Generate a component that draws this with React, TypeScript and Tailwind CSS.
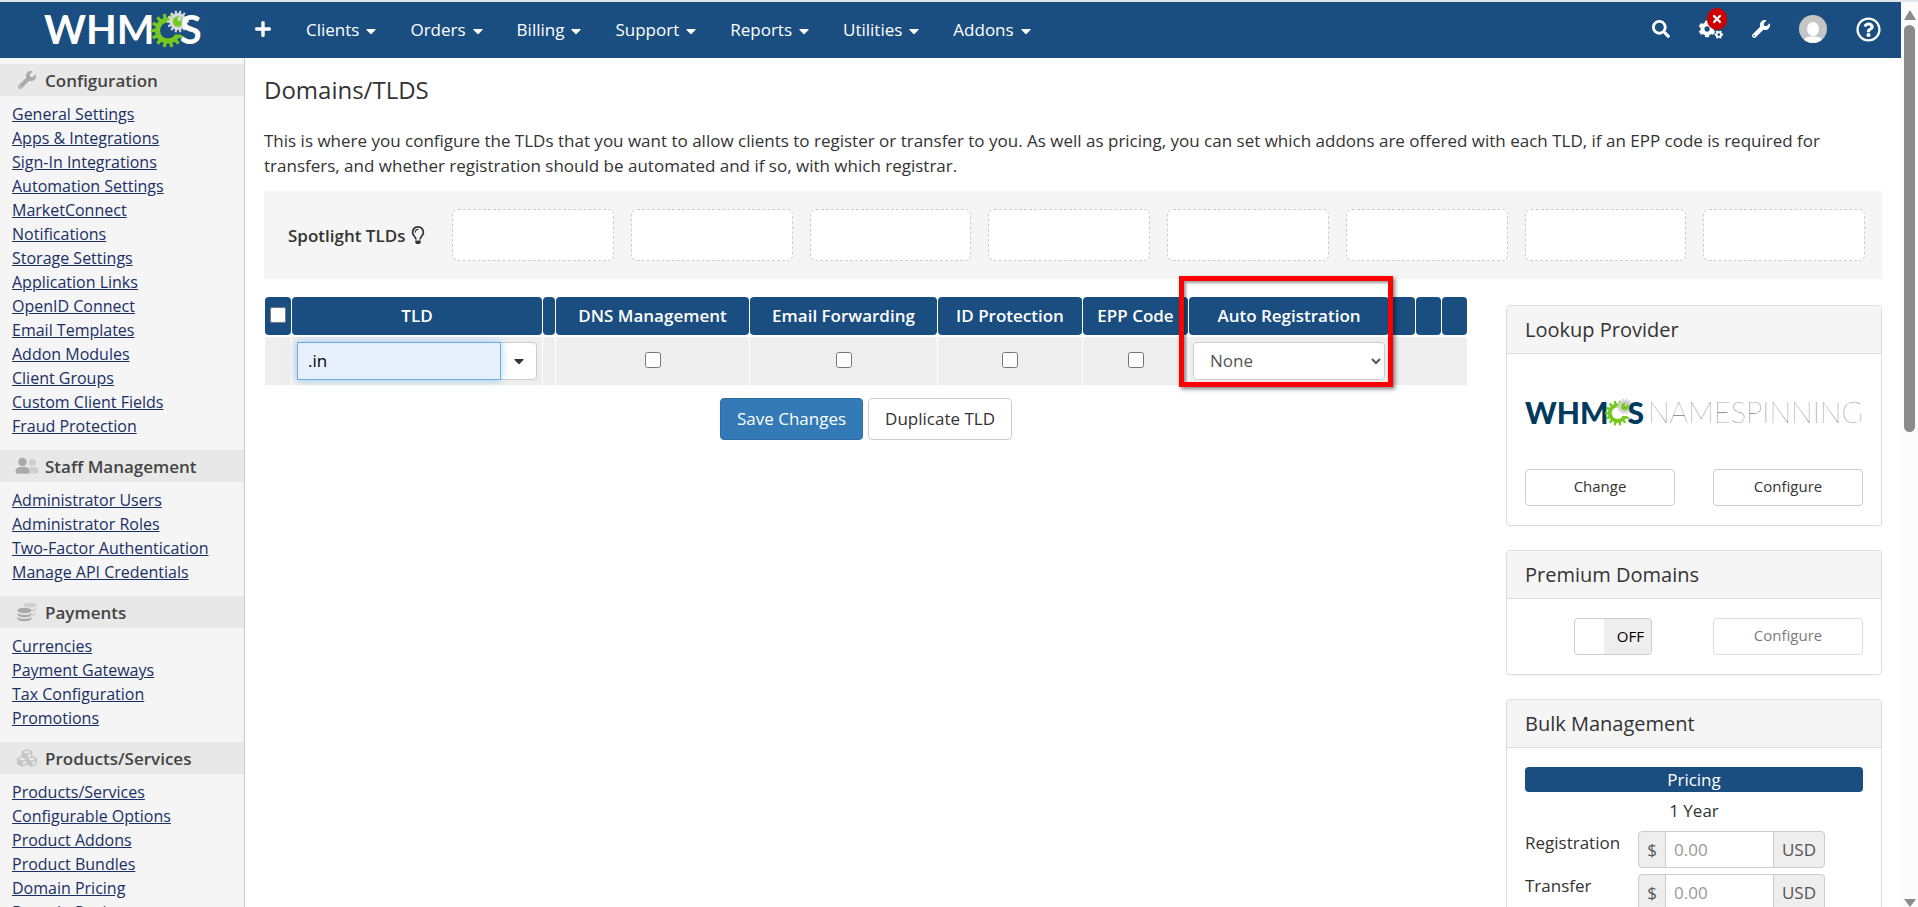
import React, { useState } from 'react';
import {
    FaCaretDown,
    FaCogs,
    FaCubes,
    FaPlus,
    FaRegLightbulb,
    FaRegQuestionCircle,
    FaSearch,
    FaTimes,
    FaWrench,
} from 'react-icons/fa';

const menus = [
    'Clients',
    'Orders',
    'Billing',
    'Support',
    'Reports',
    'Utilities',
    'Addons',
];

const UsersIcon = () => (
    <svg viewBox="0 0 24 18" className="w-6 h-[18px]">
        <g fill="#cfcfcf">
            <circle cx="17.5" cy="5.5" r="3.6" />
            <path d="M12 16.5v-2.5a4 4 0 0 1 4-4h3.5a4 4 0 0 1 4 4v2.5z" />
        </g>
        <g fill="#aaa">
            <circle cx="7.5" cy="5" r="4.2" />
            <path d="M0.5 14.5a4.5 4.5 0 0 1 4.5-4.5h5a4.5 4.5 0 0 1 4.5 4.5c0 1.5-1 2.2-2.3 2.2H2.8C1.5 16.7.5 16 .5 14.5z" />
        </g>
    </svg>
);

const CoinsIcon = () => (
    <svg viewBox="0 0 20 20" className="w-5 h-5">
        <g fill="#cfcfcf">
            <ellipse cx="13" cy="3" rx="6.5" ry="2.3" />
            <path d="M14.5 7.5c2.5 0 4.5-.8 5-2v1.5c0 1.4-2 2.5-5 2.800zM15 12c2.3-.2 4-1 4.3-2v1.5c-.2 1.3-2 2.3-4.3 2.500z" />
        </g>
        <g fill="#a9a9a9">
            <ellipse cx="7.5" cy="8.5" rx="7" ry="2.7" />
            <path d="M.5 11c1 1.3 3.500 2 7 2s6-.7 7-2v1.5c0 1.5-3 2.7-7 2.7s-7-1.2-7-2.7zM.5 15c1 1.3 3.500 2 7 2s6-.7 7-2v1.5c0 1.5-3 2.7-7 2.7s-7-1.2-7-2.7z" />
        </g>
    </svg>
);

const sections = [
    {
        title: 'Configuration',
        icon: <FaWrench className="h-[18px] w-[18px] text-[#aaa]" />,
        links: [
            'General Settings',
            'Apps & Integrations',
            'Sign-In Integrations',
            'Automation Settings',
            'MarketConnect',
            'Notifications',
            'Storage Settings',
            'Application Links',
            'OpenID Connect',
            'Email Templates',
            'Addon Modules',
            'Client Groups',
            'Custom Client Fields',
            'Fraud Protection',
        ],
    },
    {
        title: 'Staff Management',
        icon: <UsersIcon />,
        links: [
            'Administrator Users',
            'Administrator Roles',
            'Two-Factor Authentication',
            'Manage API Credentials',
        ],
    },
    {
        title: 'Payments',
        icon: <CoinsIcon />,
        links: [
            'Currencies',
            'Payment Gateways',
            'Tax Configuration',
            'Promotions',
        ],
    },
    {
        title: 'Products/Services',
        icon: <FaCubes className="h-5 w-5 text-[#c4c4c4]" />,
        links: [
            'Products/Services',
            'Configurable Options',
            'Product Addons',
            'Product Bundles',
            'Domain Pricing',
            'Domain Registrars',
        ],
    },
];

// one cog wheel centred on 0,0
const toothed = (teeth: number, outer: number, inner: number) => {
    const points: string[] = [];
    const step = (Math.PI * 2) / teeth;
    for (let i = 0; i < teeth; i++) {
        const a = i * step;
        [
            [a - step * 0.3, inner],
            [a - step * 0.2, outer],
            [a + step * 0.2, outer],
            [a + step * 0.3, inner],
        ].forEach(([angle, r]) => {
            points.push(
                `${(Math.cos(angle) * r).toFixed(2)},${(Math.sin(angle) * r).toFixed(2)}`
            );
        });
    }
    return points.join(' ');
};

const GearMark = ({
    className,
    ground,
    small,
}: {
    className: string;
    ground: string;
    small: string;
}) => (
    <svg viewBox="0 0 38 38" className={className}>
        <g transform="translate(17 20.5)">
            <polygon points={toothed(14, 17, 13)} fill="#77c81e" />
            <circle r="8" fill={ground} />
            <path d="M2 -8L18 -12V4H2z" fill={ground} />
        </g>
        <g transform="translate(27 11.5)">
            <polygon points={toothed(14, 11, 8.5)} fill={small} />
            <circle r="5.2" fill="#77c81e" />
            <circle cx="1.5" cy="-2.5" r="2" fill={small} />
        </g>
    </svg>
);

const Header = () => (
    <header className="flex h-14 items-center bg-[#1a4d80] pb-0.5 text-white">
        <a
            href="#"
            aria-label="WHMCS"
            className="mr-[53px] ml-11 flex w-[157px] items-center font-[Lato,sans-serif] text-[40px] leading-[50px] font-bold"
        >
            WHM
            <GearMark
                className="-mr-[9px] -ml-1 h-[38px] w-[38px] shrink-0"
                ground="#1a4d80"
                small="#d5d8dc"
            />
            S
        </a>
        <nav className="flex items-center gap-[34px]">
            <button aria-label="Add">
                <FaPlus className="h-[18px] w-[18px]" />
            </button>
            {menus.map((menu) => (
                <button key={menu} className="flex items-center gap-[7px]">
                    {menu}
                    <FaCaretDown className="mt-1 h-4 w-[10px]" />
                </button>
            ))}
        </nav>
        <div className="mr-5 ml-auto flex items-center gap-[29px]">
            <button aria-label="Search">
                <FaSearch className="h-[18px] w-[18px]" />
            </button>
            <button aria-label="System health" className="relative">
                <FaCogs className="h-6 w-6" />
                <span className="absolute -top-[9px] left-2 flex h-[22px] w-5 items-center justify-center rounded-full bg-[#c00]">
                    <FaTimes className="h-3 w-3" />
                </span>
            </button>
            <button aria-label="Setup">
                <FaWrench className="h-[18px] w-[18px]" />
            </button>
            <button
                aria-label="Account"
                className="h-7 w-7 overflow-hidden rounded-full"
            >
                <svg viewBox="0 0 28 28">
                    <rect width="28" height="28" fill="#c5c5c5" />
                    <ellipse cx="14" cy="14" rx="6" ry="7" fill="#fff" />
                    <path d="M4 28c1-6 5-6.500 10-6.500S23 22 24 28z" fill="#fff" />
                </svg>
            </button>
            <button aria-label="Help">
                <FaRegQuestionCircle className="h-[25px] w-[25px]" />
            </button>
        </div>
    </header>
);

const Sidebar = () => (
    <aside className="w-[245px] shrink-0 overflow-hidden border-r border-[#ccc] bg-[#f5f5f5] pt-[6px]">
        {sections.map((section) => (
            <section key={section.title}>
                <h2 className="flex h-8 items-center bg-[#e8e8e8] pl-[15px] font-semibold text-[#444]">
                    <span className="mr-[6px] flex w-6 justify-center">
                        {section.icon}
                    </span>
                    {section.title}
                </h2>
                <ul className="pt-[6px] pb-3 pl-3 text-base leading-6 whitespace-nowrap">
                    {section.links.map((link) => (
                        <li key={link}>
                            <a href="#" className="text-[#1a2f66] underline">
                                {link}
                            </a>
                        </li>
                    ))}
                </ul>
            </section>
        ))}
    </aside>
);

const Panel = ({
    title,
    children,
}: {
    title: string;
    children: React.ReactNode;
}) => (
    <section className="mb-6 rounded border border-[#ddd] shadow-xs">
        <h3 className="rounded-t border-b border-[#ddd] bg-[#f5f5f5] px-[18px] text-xl leading-[47px]">
            {title}
        </h3>
        <div className="px-[18px] py-[19px]">{children}</div>
    </section>
);

const SmallButton = ({
    disabled,
    children,
}: {
    disabled?: boolean;
    children: React.ReactNode;
}) => (
    <button
        disabled={disabled}
        className="h-[37px] w-[150px] rounded border border-[#ccc] bg-white pb-0.5 text-[15px] disabled:opacity-65"
    >
        {children}
    </button>
);

const PriceRow = ({ label }: { label: string }) => (
    <div className="mb-[6px] flex h-[37px]">
        <label htmlFor={label} className="w-[113px] leading-6">
            {label}
        </label>
        <div className="flex w-[187px] rounded border border-[#ccc] bg-[#eee] leading-[35px] text-[#555]">
            <span className="w-[26px] text-center">$</span>
            <input
                id={label}
                placeholder="0.00"
                className="w-[109px] border-x border-[#ccc] bg-white px-2 placeholder:text-[#999] outline-none"
            />
            <span className="flex-1 text-center">USD</span>
        </div>
    </div>
);

const head =
    'h-[38px] rounded bg-[#1a4d80] p-0 pb-0.5 text-center font-semibold text-white';
const cell = 'h-[48px] bg-[#eee] p-0 text-center';
const tick = 'block mx-auto mb-0.5 h-4 w-4';

const TldTable = () => {
    const [tld, setTld] = useState('.in');

    return (
        <table className="w-full table-fixed border-separate border-spacing-x-px border-spacing-y-[2px]">
            <colgroup>
                <col className="w-[26px]" />
                <col className="w-[250px]" />
                <col className="w-3" />
                <col />
                <col className="w-[187px]" />
                <col className="w-36" />
                <col className="w-[105px]" />
                <col className="w-[200px]" />
                <col className="w-[25px]" />
                <col className="w-[25px]" />
                <col className="w-[25px]" />
            </colgroup>
            <thead>
                <tr>
                    <th className={head}>
                        <input
                            type="checkbox"
                            aria-label="Select all"
                            className="mx-auto block h-4 w-4"
                        />
                    </th>
                    <th className={head}>TLD</th>
                    <th className={head} />
                    <th className={head}>DNS Management</th>
                    <th className={head}>Email Forwarding</th>
                    <th className={head}>ID Protection</th>
                    <th className={head}>EPP Code</th>
                    <th className={`${head} relative`}>
                        Auto Registration
                        <span className="pointer-events-none absolute -top-[21px] -left-[10px] z-10 h-[111px] w-[214px] border-5 border-[#f00] shadow-[2px_2px_4px_rgba(0,0,0,0.5),inset_2px_2px_3px_rgba(0,0,0,0.4)]" />
                    </th>
                    <th className={head} />
                    <th className={head} />
                    <th className={head} />
                </tr>
            </thead>
            <tbody>
                <tr>
                    <td className={cell} />
                    <td className={cell}>
                        <div className="mx-[5px] flex h-[38px]">
                            <input
                                aria-label="TLD"
                                value={tld}
                                onChange={(e) => setTld(e.target.value)}
                                className="z-1 min-w-0 flex-1 border border-[#66afe9] bg-[#e8f0fe] px-[10px] pb-0.5 text-black shadow-[0_0_8px_rgba(102,175,233,0.6)] outline-none"
                            />
                            <button
                                aria-label="TLD options"
                                className="-ml-px flex w-[37px] items-center justify-center rounded-r border border-[#ccc] bg-white"
                            >
                                <FaCaretDown className="h-4 w-[10px]" />
                            </button>
                        </div>
                    </td>
                    <td className={cell} />
                    {[
                        'DNS Management',
                        'Email Forwarding',
                        'ID Protection',
                        'EPP Code',
                    ].map((name) => (
                        <td key={name} className={cell}>
                            <input
                                type="checkbox"
                                aria-label={name}
                                className={tick}
                            />
                        </td>
                    ))}
                    <td className={cell}>
                        <select
                            aria-label="Auto Registration"
                            className="mx-auto block h-[38px] w-48 rounded border border-[#ccc] bg-white px-3 pb-0.5 text-[#555]"
                        >
                            <option>None</option>
                        </select>
                    </td>
                    <td className="bg-[#eee]" colSpan={3} />
                </tr>
            </tbody>
        </table>
    );
};

const App: React.FC = () => {
    return (
        <div className="flex h-screen overflow-hidden border-t-2 border-[#dfe5ea] bg-white font-['Open_Sans',sans-serif] text-[17px] leading-[25px] text-[#333]">
            <div className="flex min-w-0 flex-1 flex-col">
                <Header />
                <div className="flex min-h-0 flex-1">
                    <Sidebar />
                    <main className="min-w-0 flex-1 overflow-hidden px-[19px] pt-4">
                        <h1 className="mb-[22px] text-2xl leading-8">
                            Domains/TLDS
                        </h1>
                        <p className="mb-[13px]">
                            This is where you configure the TLDs that you want
                            to allow clients to register or transfer to you. As
                            well as pricing, you can set which addons are
                            offered with each TLD, if an EPP code is required
                            for transfers, and whether registration should be
                            automated and if so, with which registrar.
                        </p>
                        <div className="mb-4 flex h-[88px] items-center bg-[#f5f5f5] pr-[17px] pl-6">
                            <div className="flex w-[164px] shrink-0 items-center gap-[6px] font-semibold">
                                Spotlight TLDs
                                <FaRegLightbulb className="h-[18px] w-[14px]" />
                            </div>
                            <div className="grid flex-1 grid-cols-8 gap-[17px]">
                                {menus.concat('extra').map((slot) => (
                                    <div
                                        key={slot}
                                        className="h-[52px] rounded-md border border-dashed border-[#ccc] bg-white"
                                    />
                                ))}
                            </div>
                        </div>
                        <div className="flex gap-[38px]">
                            <div className="min-w-0 flex-1">
                                <TldTable />
                                <div className="mt-[11px] flex justify-center gap-[5px]">
                                    <button className="h-[42px] rounded border border-[#2e6da4] bg-[#337ab7] px-4 pb-0.5 text-white">
                                        Save Changes
                                    </button>
                                    <button className="h-[42px] rounded border border-[#ccc] bg-white px-4 pb-0.5">
                                        Duplicate TLD
                                    </button>
                                </div>
                            </div>
                            <div className="w-[376px] shrink-0 pt-[10px]">
                                <Panel title="Lookup Provider">
                                    <div className="mb-[19px] flex h-[77px] items-center justify-between whitespace-nowrap">
                                        <span className="flex items-center font-[Lato,sans-serif] text-[30px] leading-[40px] font-black text-[#003a5d]">
                                            WHM
                                            <GearMark
                                                className="-mr-[6px] -ml-[3px] h-7 w-7 shrink-0"
                                                ground="#fff"
                                                small="#d0d3d4"
                                            />
                                            S
                                        </span>
                                        <span className="font-[Lato,sans-serif] text-[29px] leading-[40px] font-thin text-[#444]">
                                            NAMESPINNING
                                        </span>
                                    </div>
                                    <div className="flex justify-between">
                                        <SmallButton>Change</SmallButton>
                                        <SmallButton>Configure</SmallButton>
                                    </div>
                                </Panel>
                                <Panel title="Premium Domains">
                                    <div className="flex justify-between">
                                        <button
                                            role="switch"
                                            aria-checked="false"
                                            className="ml-[49px] h-[37px] w-[78px] rounded border border-[#ccc] bg-linear-to-r from-white from-[38%] to-[#eee] to-[38%] pr-[7px] text-right text-[15px] text-black"
                                        >
                                            OFF
                                        </button>
                                        <SmallButton disabled>
                                            Configure
                                        </SmallButton>
                                    </div>
                                </Panel>
                                <Panel title="Bulk Management">
                                    <div className="rounded bg-[#1a4d80] text-center text-white">
                                        Pricing
                                    </div>
                                    <div className="mt-[6px] mb-2 text-center">
                                        1 Year
                                    </div>
                                    <PriceRow label="Registration" />
                                    <PriceRow label="Transfer" />
                                </Panel>
                            </div>
                        </div>
                    </main>
                </div>
            </div>
            <div className="flex w-[17px] flex-col items-center bg-[#fcfcfc] pt-2">
                <svg viewBox="0 0 12 10" className="h-[10px] w-3">
                    <path d="M6 0l6 10H0z" fill="#8b8b8b" />
                </svg>
                <div className="mt-[5px] h-[407px] w-[11px] rounded-full bg-[#8b8b8b]" />
                <svg viewBox="0 0 12 8" className="mt-auto h-2 w-3">
                    <path d="M0 0h12L6 8z" fill="#8b8b8b" />
                </svg>
            </div>
        </div>
    );
};

export default App;
